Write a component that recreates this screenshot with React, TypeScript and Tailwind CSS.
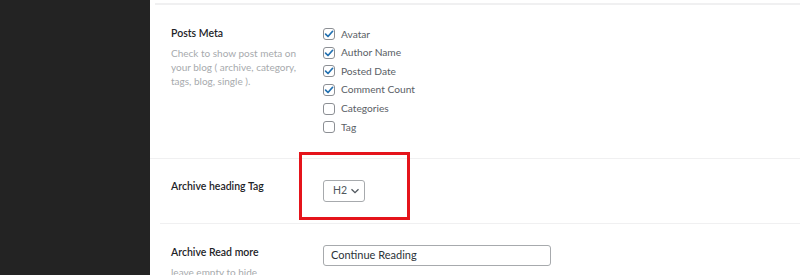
import React from "react";

const items = [
  { label: "Avatar", checked: true },
  { label: "Author Name", checked: true },
  { label: "Posted Date", checked: true },
  { label: "Comment Count", checked: true },
  { label: "Categories", checked: false },
  { label: "Tag", checked: false },
];

function Box({ checked }: { checked: boolean }) {
  return (
    <span className="flex h-[12px] w-[12px] items-center justify-center rounded-[3px] border border-[#8c8f94] bg-white">
      {checked && (
        <svg width="10" height="10" viewBox="0 0 10 10">
          <path d="M1.6 5.2 L4 7.5 L8.6 2.3" fill="none" stroke="#2271b1" strokeWidth="1.7" strokeLinecap="round" strokeLinejoin="round" />
        </svg>
      )}
    </span>
  );
}

export default function App() {
  return (
    <div
      className="flex h-[275px] w-[800px] overflow-hidden bg-white"
      style={{ fontFamily: 'Lato, "Open Sans", sans-serif' }}
    >
      <div className="w-[150px] shrink-0 bg-[#232323]" />
      <div className="flex flex-1 flex-col">
        <div className="ml-[5px] mt-[3px] h-[2px] shrink-0 bg-[#f0f0f1]" />
        {/* Row 1 */}
        <div className="flex h-[153px] shrink-0 pt-[20px]">
          <div className="w-[173px] shrink-0 pl-[21px] pt-[1px]">
            <div className="text-[10.5px] font-semibold leading-[14px] text-[#1d2327]">Posts Meta</div>
            <div className="mt-[6px] w-[130px] text-[10px] leading-[14px] text-[#a7aaad]">
              Check to show post meta on your blog ( archive, category, tags, blog, single ).
            </div>
          </div>
          <div className="flex flex-col">
            {items.map((it) => (
              <div key={it.label} className="flex h-[18.6px] items-center gap-[6px]">
                <Box checked={it.checked} />
                <span className="text-[10.2px] text-[#5a6066]">{it.label}</span>
              </div>
            ))}
          </div>
        </div>
        <div className="h-px shrink-0 bg-[#f0f0f1]" />
        {/* Row 2 */}
        <div className="relative flex h-[64px] shrink-0 items-center">
          <div className="w-[173px] shrink-0 pl-[21px] pb-[8px] text-[10.5px] font-semibold text-[#1d2327]">
            Archive heading Tag
          </div>
          <div className="flex h-[22px] w-[42px] items-center justify-between rounded-[3px] border border-[#a7aaad] bg-white pl-[9px] pr-[4px] text-[10.5px] text-[#50575e]">
            <span>H2</span>
            <svg width="10" height="10" viewBox="0 0 10 10">
              <path d="M1.5 3.2 L5 6.7 L8.5 3.2" fill="none" stroke="#50575e" strokeWidth="1.3" />
            </svg>
          </div>
          <div className="pointer-events-none absolute left-[149px] top-[-7px] h-[68px] w-[111px] border-[3px] border-[#e5141b]" />
        </div>
        <div className="ml-[10px] h-px shrink-0 bg-[#f0f0f1]" />
        {/* Row 3 */}
        <div className="flex shrink-0 pt-[21px]">
          <div className="w-[173px] shrink-0 pl-[21px]">
            <div className="text-[10.5px] font-semibold leading-[14px] text-[#1d2327]">Archive Read more</div>
            <div className="mt-[6px] text-[10px] leading-[14px] text-[#a7aaad]">leave empty to hide</div>
          </div>
          <div className="flex h-[21px] w-[228px] items-center rounded-[3px] border border-[#a7aaad] px-[7px] text-[11px] text-[#2c3338]">
            Continue Reading
          </div>
        </div>
      </div>
    </div>
  );
}
